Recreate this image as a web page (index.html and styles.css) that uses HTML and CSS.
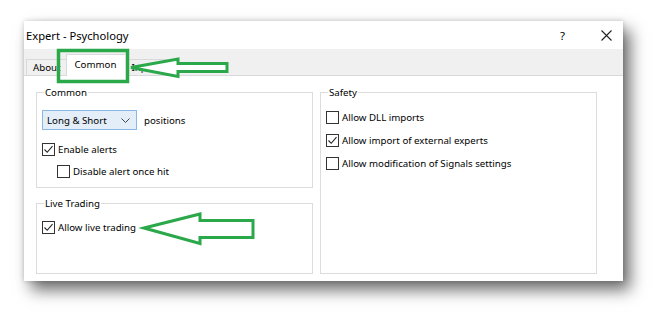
FILE: index.html
```html
<!DOCTYPE html>
<html>
<head>
<meta charset="utf-8">
<link rel="stylesheet" href="styles.css">
</head>
<body>
<div class="window">
  <div class="titlebar">
    <span class="title">Expert - Psychology</span>
    <span class="help">?</span>
    <svg class="close" width="11" height="11" viewBox="0 0 11 11"><path d="M0.5 0.5 L10.5 10.5 M10.5 0.5 L0.5 10.5" stroke="#222" stroke-width="1.1" fill="none"/></svg>
  </div>
  <div class="tabstrip">
    <div class="tab">About</div>
    <div class="tab active">Common</div>
    <div class="tab">Inputs</div>
  </div>
  <div class="page">
    <div class="col">
      <div class="group g-common">
        <div class="legend">Common</div>
        <div class="row drop-row">
          <div class="combo"><span>Long &amp; Short</span>
            <svg class="chev" width="9" height="5" viewBox="0 0 9 5"><path d="M0.5 0.5 L4.5 4.5 L8.5 0.5" stroke="#444" stroke-width="1" fill="none"/></svg>
          </div>
          <span class="after">positions</span>
        </div>
        <div class="row chk first"><span class="box checked"><svg width="11" height="11" viewBox="0 0 11 11"><path d="M1.5 5.5 L4.2 8.3 L9.5 2.2" stroke="#222" stroke-width="1.1" fill="none"/></svg></span><span>Enable alerts</span></div>
        <div class="row chk indent"><span class="box"></span><span>Disable alert once hit</span></div>
      </div>
      <div class="group g-live">
        <div class="legend">Live Trading</div>
        <div class="row chk live"><span class="box checked"><svg width="11" height="11" viewBox="0 0 11 11"><path d="M1.5 5.5 L4.2 8.3 L9.5 2.2" stroke="#222" stroke-width="1.1" fill="none"/></svg></span><span>Allow live trading</span></div>
      </div>
    </div>
    <div class="group g-safety">
      <div class="legend">Safety</div>
      <div class="row chk s first"><span class="box"></span><span>Allow DLL imports</span></div>
      <div class="row chk s"><span class="box checked"><svg width="11" height="11" viewBox="0 0 11 11"><path d="M1.5 5.5 L4.2 8.3 L9.5 2.2" stroke="#222" stroke-width="1.1" fill="none"/></svg></span><span>Allow import of external experts</span></div>
      <div class="row chk s"><span class="box"></span><span>Allow modification of Signals settings</span></div>
    </div>
  </div>
</div>
<svg class="overlay" width="665" height="323" viewBox="0 0 665 323">
  <rect x="58.5" y="50.5" width="69" height="31" fill="none" stroke="#2aa84a" stroke-width="3.5"/>
  <path d="M131 67.5 L178 59 L178 63.5 L227 63.5 L227 71.5 L178 71.5 L178 76.5 Z" fill="#fff" stroke="#2aa84a" stroke-width="3" stroke-linejoin="miter"/>
  <path d="M144 228 L200 214 L200 220.5 L253 220.5 L253 237.5 L200 237.5 L200 243.5 Z" fill="#fff" stroke="#2aa84a" stroke-width="3" stroke-linejoin="miter"/>
</svg>
</body>
</html>
```
FILE: styles.css
```css
html, body {
  margin: 0;
  padding: 0;
  background: #fff;
}
body {
  font-family: "Noto Sans", "Open Sans", sans-serif;
  font-size: 9.7px;
  color: #000;
  width: 665px;
  height: 323px;
  overflow: hidden;
}
.window {
  margin: 21px 0 0 24px;
  width: 599px;
  height: 260px;
  background: #fff;
  display: flex;
  flex-direction: column;
  box-shadow: 7px 9px 15px rgba(0,0,0,0.58), 0 0 5px rgba(0,0,0,0.18);
}
.titlebar {
  height: 28px;
  display: flex;
  align-items: center;
  padding-left: 2px;
}
.title {
  flex: 1;
  font-size: 11.2px;
  line-height: 16px;
  padding-top: 1px;
}
.help {
  font-size: 11.5px;
  width: 14px;
  margin-right: 27px;
  padding-top: 1px;
}
.close {
  margin-right: 11px;
}
.tabstrip {
  height: 27px;
  background: #f0f0f0;
  display: flex;
  align-items: flex-end;
  padding-left: 2px;
  border-bottom: 1px solid #d9d9d9;
  box-sizing: border-box;
}
.tab {
  height: 15px;
  line-height: 15px;
  border: 1px solid #d9d9d9;
  border-bottom: none;
  padding: 0 6px;
  background: #f0f0f0;
}
.tab.active {
  background: #fff;
  height: 21px;
  line-height: 19px;
  padding: 0 9px 0 8px;
  margin: 0 -2px -1px -2px;
  position: relative;
  z-index: 1;
}
.page {
  flex: 1;
  margin: 0 2px;
  padding: 8px 10px 0 10px;
  display: flex;
  gap: 7px;
  align-items: flex-start;
}
.col {
  display: flex;
  flex-direction: column;
  gap: 15px;
  width: 277px;
}
.group {
  border: 1px solid #dcdcdc;
  padding: 0 5px;
  box-sizing: border-box;
  width: 277px;
}
.legend {
  margin: -8px 0 0 2px;
  padding: 0 1px;
  line-height: 16px;
  background: #fff;
  width: fit-content;
}
.g-common { height: 96px; margin-top: 8px; }
.g-live { height: 71px; }
.g-safety { height: 182px; margin-top: 8px; }
.row {
  display: flex;
  align-items: center;
}
.drop-row {
  margin-top: 8px;
  height: 22px;
}
.combo {
  width: 95px;
  height: 20px;
  box-sizing: border-box;
  border: 1px solid #8ab8e6;
  background: #e3eef9;
  display: flex;
  align-items: center;
  padding: 0 4px;
  justify-content: space-between;
}
.chev { margin-right: 2px; }
.after { margin-left: 7px; }
.chk { height: 22px; }
.chk.first { margin-top: 7px; }
.chk.s { height: 23px; }
.g-safety .chk.first { margin-top: 5px; }
.chk.live { margin-top: 4px; }
.indent { padding-left: 15px; }
.box {
  width: 13px;
  height: 13px;
  box-sizing: border-box;
  border: 1px solid #333;
  background: #fff;
  margin-right: 3px;
  display: flex;
  align-items: center;
  justify-content: center;
  flex: none;
}
.overlay {
  position: absolute;
  left: 0;
  top: 0;
  pointer-events: none;
}
```
